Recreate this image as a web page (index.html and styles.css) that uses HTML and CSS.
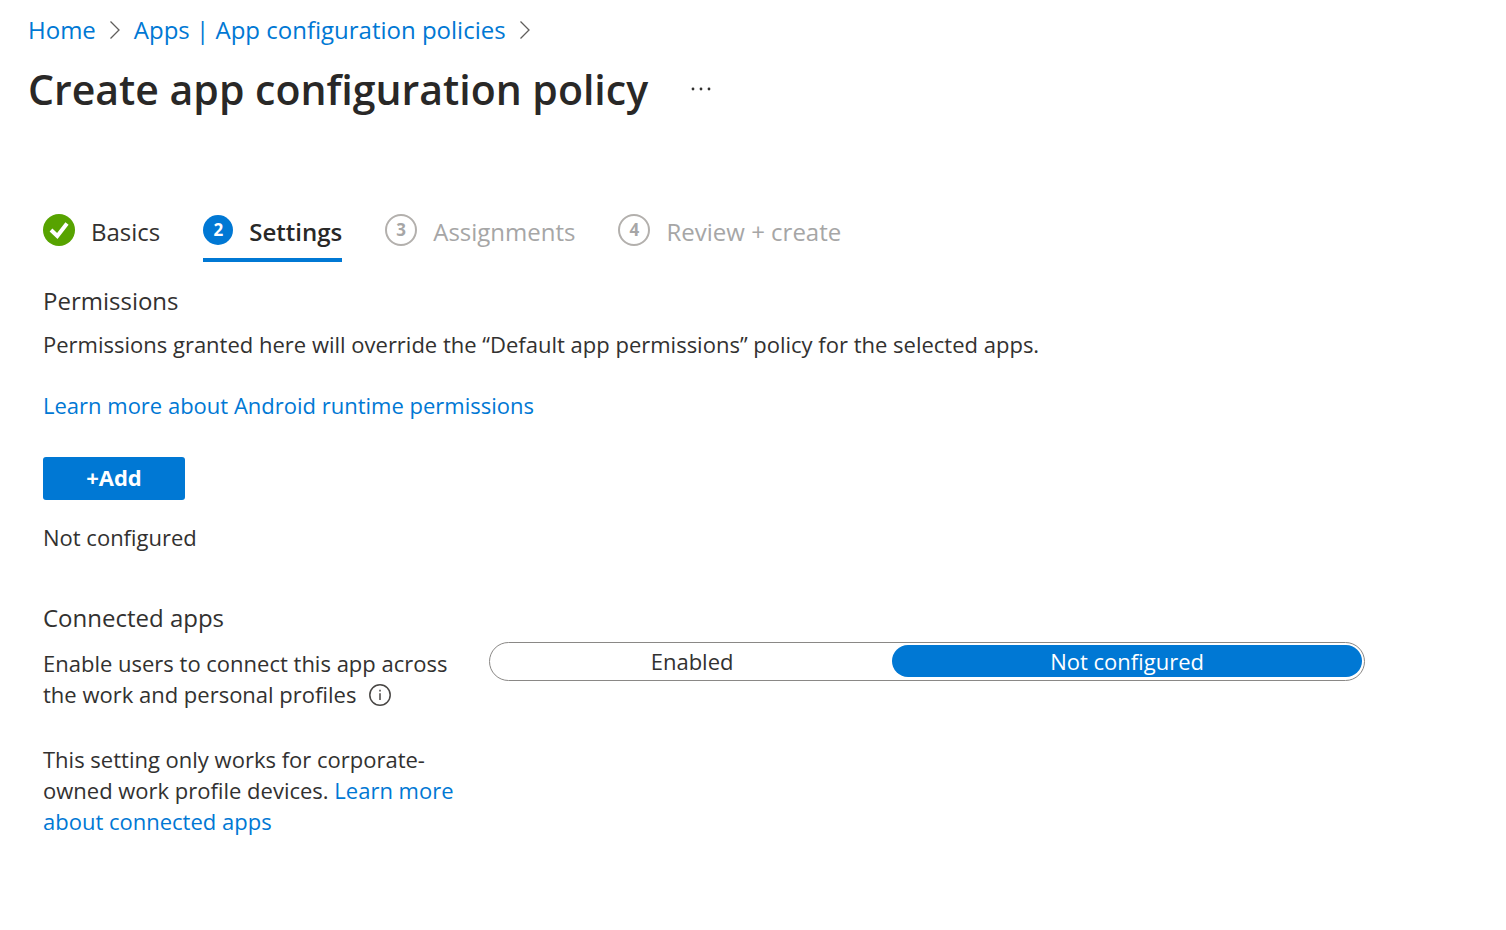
FILE: index.html
```html
<!DOCTYPE html>
<html lang="en">
<head>
    <meta charset="UTF-8">
    <meta name="viewport" content="width=device-width, initial-scale=1.0">
    <title>Create app configuration policy</title>
    <link rel="stylesheet" href="styles.css">
</head>
<body>
    <header class="header">
        <nav class="breadcrumb" aria-label="Breadcrumb">
            <a href="#">Home</a>
            <svg class="chevron" viewBox="0 0 10 20" aria-hidden="true"><path d="M0.5 1.5 9 10 0.5 18.5"/></svg>
            <a href="#">Apps | App configuration policies</a>
            <svg class="chevron" viewBox="0 0 10 20" aria-hidden="true"><path d="M0.5 1.5 9 10 0.5 18.5"/></svg>
        </nav>
        <div class="title-row">
            <h1 class="title">Create app configuration policy</h1>
            <button class="more" type="button" aria-label="More">
                <svg viewBox="0 0 20 4" aria-hidden="true"><circle cx="2" cy="2" r="1.4"/><circle cx="10" cy="2" r="1.4"/><circle cx="18" cy="2" r="1.4"/></svg>
            </button>
        </div>
    </header>

    <main class="content">
        <div class="steps">
            <button class="step" type="button">
                <svg class="step-check" viewBox="0 0 32 32" aria-hidden="true"><circle cx="16" cy="16" r="16"/><path d="M8 16 14.3 22 24 9.5"/></svg>
                <span class="step-label">Basics</span>
            </button>
            <button class="step active" type="button">
                <span class="step-number">2</span>
                <span class="step-label">Settings</span>
            </button>
            <button class="step disabled" type="button" disabled>
                <span class="step-number">3</span>
                <span class="step-label">Assignments</span>
            </button>
            <button class="step disabled" type="button" disabled>
                <span class="step-number">4</span>
                <span class="step-label">Review + create</span>
            </button>
        </div>

        <section class="permissions">
            <h2 class="section-title">Permissions</h2>
            <p class="intro">Permissions granted here will override the “Default app permissions” policy for the selected apps.</p>
            <a class="learn-more" href="#">Learn more about Android runtime permissions</a>
            <button class="add" type="button">+Add</button>
            <p class="status">Not configured</p>
        </section>

        <section class="connected">
            <h2 class="section-title">Connected apps</h2>
            <div class="field">
                <div class="field-text">
                    <p id="connect-label">Enable users to connect this app across<br>the work and personal profiles
                        <svg class="info" viewBox="0 0 22 22" aria-hidden="true"><circle cx="11" cy="11" r="10.2"/><path d="M11 9.2V16M11 5.8V7.4"/></svg>
                    </p>
                    <p class="note">This setting only works for corporate-<br>owned work profile devices. <a href="#">Learn more<br>about connected apps</a></p>
                </div>
                <div class="toggle" role="radiogroup" aria-labelledby="connect-label">
                    <label class="option"><input type="radio" name="connect" value="enabled"><span>Enabled</span></label>
                    <label class="option"><input type="radio" name="connect" value="none" checked><span>Not configured</span></label>
                </div>
            </div>
        </section>
    </main>
</body>
</html>
```
FILE: styles.css
```css
* {
    box-sizing: border-box;
}
body {
    margin: 0;
    background-color: #fff;
    color: #323130;
    font-family: "Open Sans", "Noto Sans", sans-serif;
    font-size: 22px;
    line-height: 31px;
}
h1, h2, p {
    margin: 0;
}
a {
    color: #0078d4;
    text-decoration: none;
}
a:hover {
    text-decoration: underline;
}
button {
    font-family: inherit;
    border: none;
    padding: 0;
    background: none;
    cursor: pointer;
}
.header {
    padding: 14px 28px 0;
}
.breadcrumb {
    display: flex;
    align-items: center;
    gap: 14px;
    font-size: 24px;
    line-height: 32px;
}
.chevron {
    width: 10px;
    height: 20px;
    fill: none;
    stroke: #605e5c;
    stroke-width: 1.3;
}
.title-row {
    display: flex;
    align-items: center;
    gap: 43px;
    margin-top: 15px;
}
.title {
    color: #292827;
    font-size: 41px;
    font-weight: 600;
    line-height: 56px;
}
.more svg {
    display: block;
    width: 20px;
    height: 4px;
    fill: #323130;
}
.content {
    padding: 96px 141px 40px 43px;
}
.steps {
    display: flex;
    gap: 43px;
}
.step {
    display: flex;
    align-items: center;
    gap: 16px;
    height: 49px;
    padding-bottom: 12px;
    border-bottom: 4px solid transparent;
    color: #323130;
    font-size: 24px;
    line-height: 29px;
}
.step-label {
    padding-top: 4px;
}
.step.active {
    border-bottom-color: #0078d4;
    color: #292827;
    font-weight: 600;
}
.step.disabled {
    color: #a6a6a6;
    cursor: default;
}
.step-check {
    width: 32px;
    height: 32px;
    fill: #57a300;
}
.step-check path {
    fill: none;
    stroke: #fff;
    stroke-width: 4;
}
.step-number {
    width: 32px;
    height: 32px;
    border: 2px solid #b3b0ad;
    border-radius: 50%;
    font-size: 17px;
    font-weight: 700;
    line-height: 28px;
    text-align: center;
}
.active .step-number {
    width: 30px;
    height: 30px;
    border: none;
    background-color: #0078d4;
    color: #fff;
    line-height: 30px;
}
.section-title {
    font-size: 24px;
    font-weight: 400;
    line-height: 32px;
}
.permissions {
    display: flex;
    flex-direction: column;
    align-items: flex-start;
    margin-top: 23px;
}
.intro {
    margin-top: 12px;
}
.learn-more {
    margin-top: 30px;
}
.add {
    width: 142px;
    height: 43px;
    margin-top: 36px;
    padding-bottom: 4px;
    border-radius: 3px;
    background-color: #0078d4;
    color: #fff;
    font-size: 22px;
    font-weight: 700;
}
.add:hover {
    background-color: #106ebe;
}
.status {
    margin-top: 22px;
}
.connected {
    margin-top: 49px;
}
.field {
    display: grid;
    grid-template-columns: 410px 1fr;
    align-items: start;
    gap: 36px;
    margin-top: 8px;
}
.field-text {
    padding-top: 6px;
    white-space: nowrap;
}
.info {
    width: 22px;
    height: 22px;
    margin-left: 7px;
    vertical-align: -3px;
    fill: none;
    stroke: #484644;
    stroke-width: 1.5;
}
.note {
    margin-top: 34px;
}
.toggle {
    display: grid;
    grid-template-columns: 46fr 54fr;
    height: 39px;
    padding: 2px;
    border: 1px solid #8a8886;
    border-radius: 20px;
}
.option input {
    position: absolute;
    opacity: 0;
}
.option span {
    display: block;
    height: 32px;
    border-radius: 16px;
    line-height: 33px;
    text-align: center;
    cursor: pointer;
}
.option input:checked + span {
    background-color: #0078d4;
    color: #fff;
}
.option input:focus-visible + span {
    outline: 1px solid #323130;
}
```
